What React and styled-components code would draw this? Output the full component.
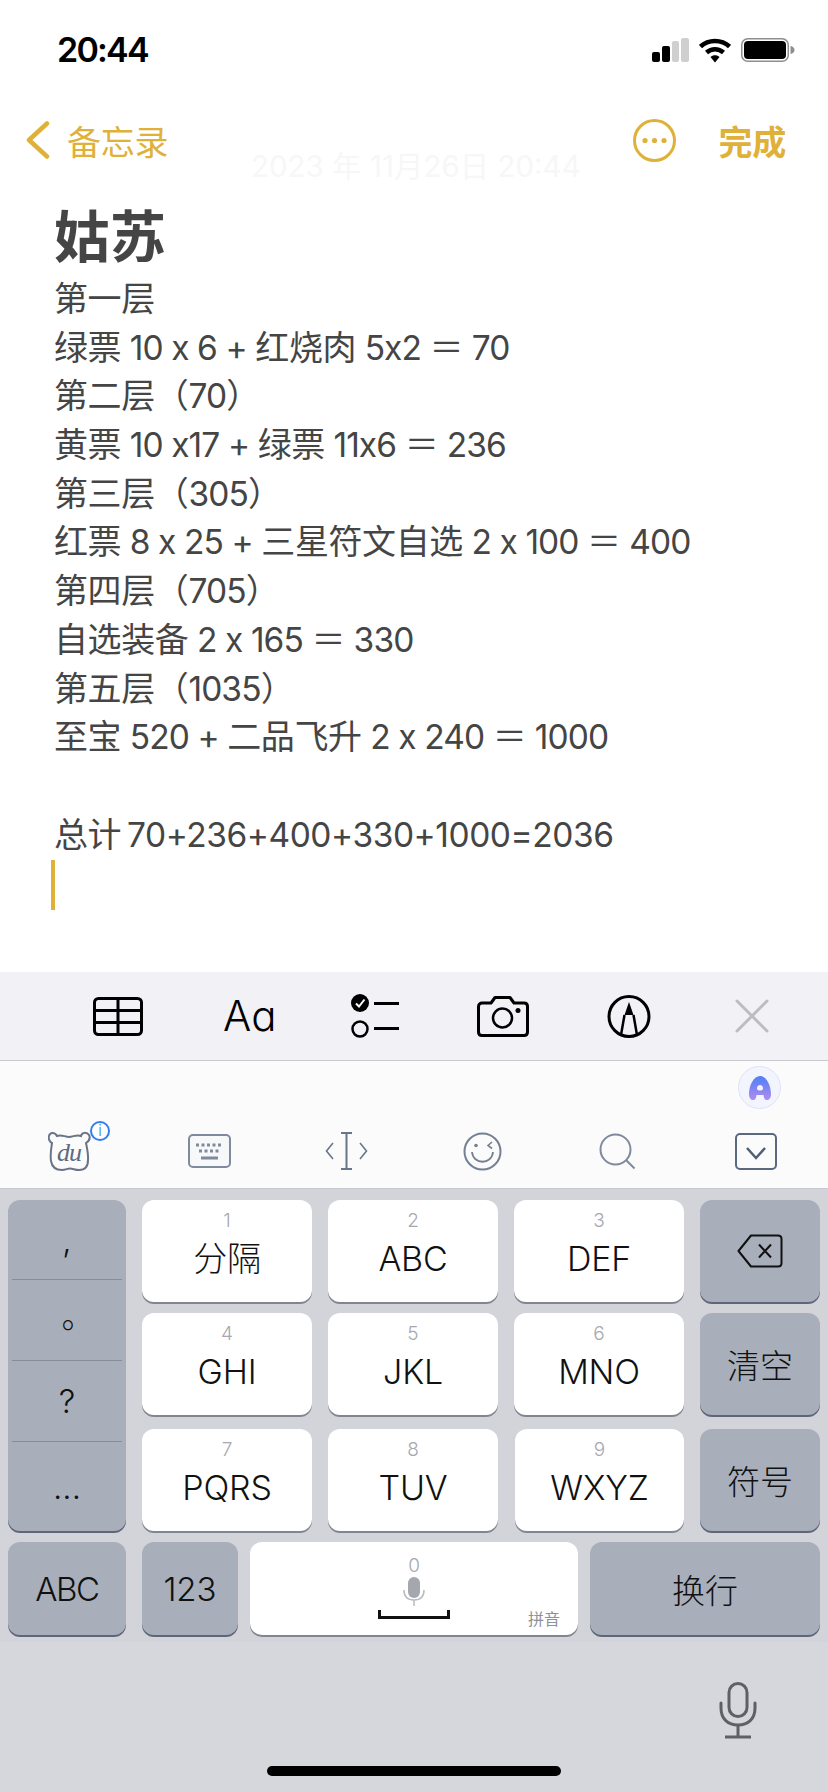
import React from "react";
import styled, { createGlobalStyle } from "styled-components";

const Global = createGlobalStyle`
  html, body { margin: 0; padding: 0; background: #fff; }
  body { font-family: Inter, "Noto Sans CJK SC", sans-serif; }
`;
const Page = styled.div`
  width: 828px; height: 1792px; display: flex; flex-direction: column; overflow: hidden; background: #fff;
`;
const StatusBar = styled.div`
  height: 100px; flex: none; box-sizing: border-box; padding: 0 33px 0 57px;
  display: flex; align-items: center; justify-content: space-between;
`;
const Time = styled.div`
  font: 600 34px/1 Inter, sans-serif; color: #000; letter-spacing: -1.8px;
`;
const StatusIcons = styled.div`display: flex; align-items: center; gap: 10px;`;
const Nav = styled.div`
  position: relative; height: 80px; flex: none; box-sizing: border-box; padding: 0 42px 0 26px;
  display: flex; align-items: center; color: #dfb139; font-size: 34px; letter-spacing: -0.3px;
`;
const Back = styled.div`display: flex; align-items: center; gap: 17px; flex: 1;`;
const Done = styled.div`font-weight: 600; margin-left: 43px;`;
const Watermark = styled.div`
  position: absolute; left: 251px; top: 51px; font-size: 29.5px; line-height: 30px; letter-spacing: 0; color: #f7f7f7; white-space: nowrap;
`;
const Note = styled.div`
  flex: 1; padding: 19px 0 0 54px; color: #454545; box-sizing: border-box;
`;
const Title = styled.div`font-size: 56px; font-weight: 700; line-height: 76px;`;
const Line = styled.div`font-size: 34px; letter-spacing: -0.4px; line-height: 48.7px; height: 48.7px; white-space: pre;`;
const Latin = styled.span`letter-spacing: ${p => p.$ls}px; font-size: 33.5px;`;
const Caret = styled.div`width: 4px; height: 50px; margin: 1px 0 0 -3px; background: #dfb139;`;
const Toolbar = styled.div`
  height: 88px; flex: none; background: #f1f1f6; border-bottom: 1px solid #c8c8d0;
  box-sizing: content-box; padding-left: 93px;
  display: flex; align-items: center;
`;
const Slot = styled.div`display: flex; margin-left: ${p => p.$gap || 0}px;`;
const AaGlyph = styled.div`
  font: 300 42px/1 Inter, sans-serif; color: #000; width: 52px; text-align: center; white-space: nowrap;
`;
const Candidates = styled.div`
  height: 128px; flex: none; background: #fbfbfb; display: flex; flex-direction: column;
  border-bottom: 1px solid #c9cacf; box-sizing: border-box;
`;
const AssistRow = styled.div`
  height: 70px; padding: 5px 47px 0 0; display: flex; justify-content: flex-end; box-sizing: border-box;
`;
const Assist = styled.div`
  width: 43px; height: 43px; border-radius: 50%; background: #f2f4fe; border: 1px solid #dfe2f5;
  box-sizing: border-box; display: flex; align-items: center; justify-content: center;
`;
const ToolRow = styled.div`
  display: flex; align-items: center; padding-left: 48px; height: 40px;
`;
const Bear = styled.div`position: relative; width: 43px; height: 40px;`;
const BearMark = styled.span`
  position: absolute; left: 9px; top: 9px; font: italic 400 26px/26px "Liberation Serif", serif; color: #5d6a80; letter-spacing: -1px;
`;
const InfoBadge = styled.span`
  position: absolute; left: 42px; top: -10px; width: 20px; height: 20px; box-sizing: border-box; border-radius: 50%;
  border: 2px solid #2f7ff0; background: #fff; color: #2f7ff0;
  font: 300 15px/16px Inter, sans-serif; text-align: center;
`;
const Keyboard = styled.div`
  flex: none; height: 603px; background: #d2d4da; box-sizing: border-box; padding: 11px 8px 0;
`;
const Grid = styled.div`
  display: grid; grid-template-columns: 118px 170px 170px 170px 120px; column-gap: 16px;
  grid-template-rows: 113px 116px 102px;
`;
const Key = styled.div`
  position: relative; box-sizing: border-box; height: ${p => p.$h || 102}px; border-radius: 12px;
  width: ${p => p.$w ? `${p.$w}px` : "auto"};
  background: ${p => p.$dark ? "#a9afba" : "#fff"};
  box-shadow: 0 2px 0 ${p => p.$dark ? "#5f667a" : "#82858f"};
  color: #111; font-size: 33px; font-weight: 300; letter-spacing: ${p => p.$ls || 0}px;
  display: flex; flex-direction: column; align-items: center; justify-content: center;
  margin-left: ${p => p.$nudge || 0}px;
  margin-right: ${p => p.$after || 0}px;
`;
const Hint = styled.div`
  font-size: 19px; line-height: 22px; color: #a6a8ae; font-weight: 300; margin-top: -11px;
`;
const Label = styled.div`font-size: 34px; line-height: 44px; margin-top: 5px; letter-spacing: -0.2px;`;
const Side = styled.div`
  grid-row: 1 / span 3; height: 331px; border-radius: 12px; background: #a9afba;
  box-shadow: 0 2px 0 #5f667a; padding: 0 4px; display: flex; flex-direction: column;
`;
const SideCell = styled.div`
  height: ${p => p.$h}px; flex: none; box-sizing: border-box; display: flex; align-items: center; justify-content: center;
  color: #111; font-size: 33px; font-weight: 300;
  border-bottom: ${p => p.$last ? "none" : "1px solid #888d99"};
`;
const RoundStop = styled.span`transform: translate(11px, -6px);`;
const BottomRow = styled.div`display: flex; gap: 12px; margin-top: 11px;`;
const SpaceHint = styled.div`font-size: 19px; line-height: 22px; color: #a6a8ae; font-weight: 300; margin-top: -3px;`;
const Pinyin = styled.span`
  position: absolute; right: 18px; bottom: 6px; font-size: 16px; line-height: 20px; color: #8f9197; font-weight: 400;
`;
const SpaceBar = styled.div`
  width: 72px; height: 9px; box-sizing: border-box; border: 3px solid #111; border-top: none; margin-top: 4px;
`;
const Footer = styled.div`
  position: relative; background: #d6d7dc; margin: 7px -8px 0; height: 150px; box-sizing: border-box;
`;
const FooterMic = styled.div`position: absolute; left: 719px; top: 40px;`;
const HomeBar = styled.div`
  position: absolute; left: 267px; top: 124px; width: 294px; height: 10px; border-radius: 5px; background: #000;
`;

const Signal = () => (
  <svg width="37" height="24" viewBox="0 0 37 24">
    <rect x="0" y="14" width="8" height="10" rx="2" fill="#000" />
    <rect x="10" y="8" width="8" height="16" rx="2" fill="#000" />
    <rect x="20" y="3" width="7" height="21" rx="2" fill="#cfcfcf" />
    <rect x="29" y="0" width="8" height="24" rx="2" fill="#cfcfcf" />
  </svg>
);
const Wifi = () => (
  <svg width="32" height="25" viewBox="0 0 32 25">
    <path d="M1.5 8.5 C9.5 1 22.5 1 30.5 8.5" fill="none" stroke="#000" strokeWidth="4.5" />
    <path d="M7.5 14.5 C12.5 10 19.5 10 24.5 14.5" fill="none" stroke="#000" strokeWidth="4.5" />
    <path d="M11.5 19 L16 24.5 L20.5 19 C18 16.5 14 16.5 11.5 19 Z" fill="#000" />
  </svg>
);
const Battery = () => (
  <svg width="54" height="24" viewBox="0 0 54 24">
    <rect x="0.75" y="0.75" width="46.5" height="22.5" rx="6" fill="none" stroke="#8e8e8e" strokeWidth="1.5" />
    <rect x="3" y="3" width="42" height="18" rx="4" fill="#000" />
    <path d="M49.5 8 C52 8.5 53.5 10 53.5 12 C53.5 14 52 15.5 49.5 16 Z" fill="#8e8e8e" />
  </svg>
);
const Chevron = () => (
  <svg width="24" height="38" viewBox="0 0 24 38">
    <path d="M21 2.5 L3 19 L21 35.5" fill="none" stroke="#dfb139" strokeWidth="4.5" strokeLinecap="round" strokeLinejoin="round" />
  </svg>
);
const More = () => (
  <svg width="43" height="43" viewBox="0 0 43 43">
    <circle cx="21.5" cy="21.5" r="20" fill="none" stroke="#dfb139" strokeWidth="3" />
    <circle cx="12" cy="21.5" r="2.6" fill="#dfb139" />
    <circle cx="21.5" cy="21.5" r="2.6" fill="#dfb139" />
    <circle cx="31" cy="21.5" r="2.6" fill="#dfb139" />
  </svg>
);
const TableIcon = () => (
  <svg width="50" height="39" viewBox="0 0 50 39">
    <rect x="1.5" y="1.5" width="47" height="36" rx="4" fill="none" stroke="#000" strokeWidth="3" />
    <path d="M1.5 13.5 H48.5 M1.5 25.5 H48.5 M25 1.5 V37.5" stroke="#000" strokeWidth="3" fill="none" />
  </svg>
);
const ChecklistIcon = () => (
  <svg width="48" height="44" viewBox="0 0 48 44">
    <circle cx="9" cy="9" r="9" fill="#000" />
    <path d="M5 9.5 L8 12.5 L13.5 5.5" fill="none" stroke="#fff" strokeWidth="2" />
    <circle cx="9" cy="35" r="7.5" fill="none" stroke="#000" strokeWidth="2.5" />
    <path d="M23 9.5 H48 M23 34.5 H48" stroke="#000" strokeWidth="3" />
  </svg>
);
const CameraIcon = () => (
  <svg width="52" height="41" viewBox="0 0 52 41">
    <path d="M5 7 H14 L18 1.5 H33 L37 7 H47 C49.5 7 50.5 8.5 50.5 10.5 V36 C50.5 38.5 49 39.5 47 39.5 H5 C3 39.5 1.5 38.5 1.5 36 V10.5 C1.5 8.5 3 7 5 7 Z" fill="none" stroke="#000" strokeWidth="3" strokeLinejoin="round" />
    <circle cx="25.5" cy="22" r="9.5" fill="none" stroke="#000" strokeWidth="2.5" />
    <circle cx="41" cy="14.5" r="2.5" fill="#000" />
  </svg>
);
const MarkupIcon = () => (
  <svg width="44" height="43" viewBox="0 0 44 43">
    <circle cx="22" cy="21.5" r="20" fill="none" stroke="#000" strokeWidth="3" />
    <path d="M22 7 L17.5 20 H26.5 Z" fill="#000" />
    <path d="M17.5 20 L14 40 M26.5 20 L30 40" stroke="#000" strokeWidth="2.5" fill="none" />
  </svg>
);
const CloseIcon = () => (
  <svg width="34" height="34" viewBox="0 0 34 34">
    <path d="M2 2 L32 32 M32 2 L2 32" stroke="#bdbdc1" strokeWidth="3" strokeLinecap="round" />
  </svg>
);
const AssistLogo = () => (
  <svg width="26" height="26" viewBox="0 0 26 26">
    <defs>
      <linearGradient id="asg" x1="0" y1="0" x2="0" y2="1">
        <stop offset="0" stopColor="#4f7ff5" />
        <stop offset="1" stopColor="#b08cf0" />
      </linearGradient>
    </defs>
    <path fillRule="evenodd" d="M13 1 C19 1 24 10 24 19 C24 23 22 25 20 25 C17.5 25 17 23 16.5 20 H9.5 C9 23 8.5 25 6 25 C4 25 2 23 2 19 C2 10 7 1 13 1 Z M13 10 C11.4 10 10 11.5 10 13.5 C10 15 11.4 15.5 13 15.5 C14.6 15.5 16 15 16 13.5 C16 11.5 14.6 10 13 10 Z" fill="url(#asg)" />
  </svg>
);
const BearOutline = () => (
  <svg width="43" height="40" viewBox="0 0 43 40">
    <path d="M9 5 C7 1 2 1 1 5 C0 8 2 11 4 12 C3 18 2 24 3 30 C4 36 8 39 14 39 C18 39 19 37.5 22 37.5 C25 37.5 27 39 31 39 C37 39 40 35 40 29 C40.5 23 39 17 38 12 C41 10 42.5 7 41 4 C39 1 34 1 33 5 C29 3 25 6 21 6 C17 6 13 3 9 5 Z" fill="#fbfbfb" stroke="#6b7487" strokeWidth="2" />
  </svg>
);
const KeyboardIcon = () => (
  <svg width="43" height="34" viewBox="0 0 43 34">
    <rect x="1" y="1" width="41" height="32" rx="4" fill="#f7f8fa" stroke="#7f8a9c" strokeWidth="2" />
    <path d="M8 11 H35 M11 17 H32" stroke="#7f8a9c" strokeWidth="3" strokeDasharray="3 2.5" fill="none" />
    <path d="M13 24 H30" stroke="#7f8a9c" strokeWidth="3" />
  </svg>
);
const CursorIcon = () => (
  <svg width="43" height="38" viewBox="0 0 43 38">
    <path d="M16 1 H27 M21.5 1 V37 M16 37 H27" stroke="#69758a" strokeWidth="2" fill="none" />
    <path d="M8 11 L1.5 19 L8 27 M35 11 L41.5 19 L35 27" stroke="#69758a" strokeWidth="1.6" fill="none" />
  </svg>
);
const SmileyIcon = () => (
  <svg width="39" height="39" viewBox="0 0 39 39">
    <circle cx="19.5" cy="19.5" r="18" fill="none" stroke="#737f92" strokeWidth="2" />
    <circle cx="13" cy="13.5" r="1.8" fill="#737f92" />
    <path d="M29 10 L25 13.5 L29 16.5" stroke="#737f92" strokeWidth="1.6" fill="none" />
    <path d="M9 20 C10 33 29 33 30 20" stroke="#737f92" strokeWidth="1.8" fill="none" />
  </svg>
);
const SearchIcon = () => (
  <svg width="37" height="37" viewBox="0 0 37 37">
    <circle cx="16.5" cy="16.5" r="15" fill="none" stroke="#7f8a9c" strokeWidth="2" />
    <path d="M27 27 L35.5 35.5" stroke="#7f8a9c" strokeWidth="2" />
  </svg>
);
const CollapseIcon = () => (
  <svg width="42" height="37" viewBox="0 0 42 37">
    <rect x="1" y="1" width="40" height="35" rx="4" fill="#fbfbfb" stroke="#5a6880" strokeWidth="2" />
    <path d="M12 15 L21 25 L30 15" fill="none" stroke="#4f5d75" strokeWidth="2.5" />
  </svg>
);
const BackspaceIcon = () => (
  <svg width="46" height="34" viewBox="0 0 46 34">
    <path d="M14 1.5 H41 C43.5 1.5 44.5 3 44.5 5 V29 C44.5 31 43.5 32.5 41 32.5 H14 L1.5 17 Z" fill="none" stroke="#111" strokeWidth="2" strokeLinejoin="round" />
    <path d="M22 10.5 L34 23.5 M34 10.5 L22 23.5" stroke="#111" strokeWidth="2" />
  </svg>
);
const SmallMic = () => (
  <svg width="22" height="29" viewBox="0 0 22 29">
    <rect x="5" y="0" width="12" height="21" rx="6" fill="#a4a7ad" />
    <path d="M1 13 C1 20 5 23 11 23 C17 23 21 20 21 13" fill="none" stroke="#b9bbc1" strokeWidth="1.5" />
    <path d="M11 23 V29" stroke="#b9bbc1" strokeWidth="1.5" />
  </svg>
);
const BigMic = () => (
  <svg width="38" height="57" viewBox="0 0 38 57">
    <rect x="10" y="1.5" width="18" height="33" rx="9" fill="none" stroke="#5e6066" strokeWidth="3" />
    <path d="M2 21 V26 C2 37 9 43 19 43 C29 43 36 37 36 26 V21" fill="none" stroke="#5e6066" strokeWidth="3" strokeLinecap="round" />
    <path d="M19 43 V54 M6 55 H32" stroke="#5e6066" strokeWidth="3" />
  </svg>
);

const lines = [
  "第一层",
  "绿票 10 x 6 + 红烧肉 5x2 ＝ 70",
  "第二层（70）",
  "黄票 10 x17 + 绿票 11x6 ＝ 236",
  "第三层（305）",
  "红票 8 x 25 + 三星符文自选 2 x 100 ＝ 400",
  "第四层（705）",
  "自选装备 2 x 165 ＝ 330",
  "第五层（1035）",
  "至宝 520 + 二品飞升 2 x 240 ＝ 1000",
  " ",
  "总计\u200970+236+400+330+1000=2036",
];
const segment = (text) =>
  text.split(/([\x20-\x7e]+)/).filter(Boolean).map((part, i) =>
    /^[\x20-\x7e]+$/.test(part)
      ? <Latin key={i} $ls={part.includes("=") ? -0.45 : -0.9}>{part}</Latin>
      : part
  );
const TextKey = ({ hint, label, nudge }) => (
  <Key $nudge={nudge}>
    <Hint>{hint}</Hint>
    <Label>{label}</Label>
  </Key>
);

export default function App() {
  return (
    <Page>
      <Global />
      <StatusBar>
        <Time>20:44</Time>
        <StatusIcons><Signal /><Wifi /><Battery /></StatusIcons>
      </StatusBar>
      <Nav>
        <Back><Chevron /><span>备忘录</span></Back>
        <More />
        <Done>完成</Done>
        <Watermark>2023 年 11月26日 20:44</Watermark>
      </Nav>
      <Note>
        <Title>姑苏</Title>
        {lines.map((l, i) => <Line key={i}>{segment(l)}</Line>)}
        <Caret />
      </Note>
      <Toolbar>
        <Slot><TableIcon /></Slot>
        <Slot $gap={80}><AaGlyph>Aɑ</AaGlyph></Slot>
        <Slot $gap={76}><ChecklistIcon /></Slot>
        <Slot $gap={78}><CameraIcon /></Slot>
        <Slot $gap={78}><MarkupIcon /></Slot>
        <Slot $gap={84}><CloseIcon /></Slot>
      </Toolbar>
      <Candidates>
        <AssistRow><Assist><AssistLogo /></Assist></AssistRow>
        <ToolRow>
          <Bear><BearOutline /><BearMark>du</BearMark><InfoBadge>i</InfoBadge></Bear>
          <Slot $gap={97}><KeyboardIcon /></Slot>
          <Slot $gap={94}><CursorIcon /></Slot>
          <Slot $gap={95}><SmileyIcon /></Slot>
          <Slot $gap={97}><SearchIcon /></Slot>
          <Slot $gap={99}><CollapseIcon /></Slot>
        </ToolRow>
      </Candidates>
      <Keyboard>
        <Grid>
          <Side>
            <SideCell $h={80}>,</SideCell>
            <SideCell $h={81}><RoundStop>。</RoundStop></SideCell>
            <SideCell $h={81}>?</SideCell>
            <SideCell $h={89} $last>...</SideCell>
          </Side>
          <TextKey hint="1" label="分隔" />
          <TextKey hint="2" label="ABC" />
          <TextKey hint="3" label="DEF" />
          <Key $dark><BackspaceIcon /></Key>
          <TextKey hint="4" label="GHI" />
          <TextKey hint="5" label="JKL" />
          <TextKey hint="6" label="MNO" />
          <Key $dark>清空</Key>
          <TextKey hint="7" label="PQRS" />
          <TextKey hint="8" label="TUV" />
          <TextKey hint="9" label="WXYZ" nudge={1} />
          <Key $dark>符号</Key>
        </Grid>
        <BottomRow>
          <Key $dark $w={118} $h={93} $after={4} $ls={-1.4}>ABC</Key>
          <Key $dark $w={96} $h={93}>123</Key>
          <Key $w={328} $h={93}>
            <SpaceHint>0</SpaceHint>
            <SmallMic />
            <SpaceBar />
            <Pinyin>拼音</Pinyin>
          </Key>
          <Key $dark $w={230} $h={93}>换行</Key>
        </BottomRow>
        <Footer>
          <FooterMic><BigMic /></FooterMic>
          <HomeBar />
        </Footer>
      </Keyboard>
    </Page>
  );
}
